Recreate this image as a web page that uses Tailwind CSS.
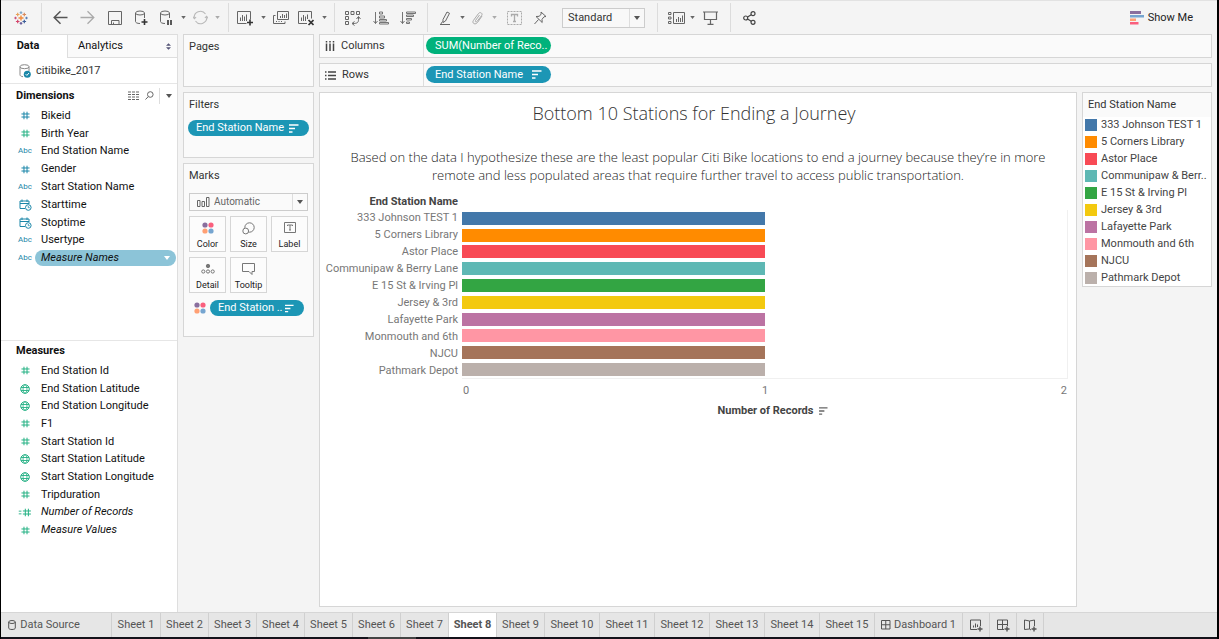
<!DOCTYPE html>
<html lang="en">
<head>
<meta charset="utf-8">
<meta name="viewport" content="width=device-width, initial-scale=1">
<title>citibike_2017</title>
<script src="https://cdn.jsdelivr.net/npm/@tailwindcss/browser@4"></script>
</head>
<body class="min-h-screen flex flex-col bg-black pl-px pr-0.5 font-[Roboto,sans-serif] text-[11px] leading-4 text-[#333]">

<svg class="hidden" aria-hidden="true">
  <symbol id="caret" viewBox="0 0 6 4"><path d="M0 0h6L3 4z" fill="currentColor"/></symbol>
  <symbol id="hash" viewBox="0 0 10 10"><path d="M3.3.8v8.4M6.7.8v8.4M.5 3.3h9M.5 6.7h9" stroke="currentColor" stroke-width="1.1" fill="none"/></symbol>
  <symbol id="globe" viewBox="0 0 10 10"><g stroke="currentColor" fill="none"><circle cx="5" cy="5" r="4.3"/><ellipse cx="5" cy="5" rx="2" ry="4.3" stroke-width=".8"/><path d="M1 3.5h8M1 6.5h8" stroke-width=".9"/></g></symbol>
  <symbol id="datetime" viewBox="0 0 13 12"><g stroke="currentColor" fill="none"><path d="M6 9.5H1V2h9v3M1 4.5h9M3 .5V3M8 .5V3"/><circle cx="9.3" cy="8.5" r="2.8"/><path d="M9.3 7v1.7h1.4" stroke-width=".8"/></g></symbol>
  <symbol id="sortlines" viewBox="0 0 10 9"><path d="M0 1h9.5M0 4.5h6M0 8h3.5" stroke="currentColor" stroke-width="1.5"/></symbol>
  <symbol id="dots" viewBox="0 0 12 12"><circle cx="3" cy="3" r="2.6" fill="#8a6f9e"/><circle cx="9" cy="3" r="2.6" fill="#fa5f7d"/><circle cx="3" cy="9" r="2.6" fill="#ffa074"/><circle cx="9" cy="9" r="2.6" fill="#76a5d0"/></symbol>
  <symbol id="grid" viewBox="0 0 10 10"><path d="M.5.5h8.5v8.5H.5zM4.75.5v8.5M.5 4.75h8.5" stroke="currentColor" fill="none"/></symbol>
</svg>

<header class="flex h-[34px] shrink-0 items-stretch border-t border-[#e2e2e2] bg-[#f4f4f4] text-[#666]">
  <div class="flex w-10 items-center justify-center">
    <svg class="size-[14px]" viewBox="0 0 14 14" role="img" aria-label="Tableau" fill="none" stroke-width="1.2">
      <path d="M7 4.5v5M4.5 7h5" stroke="#f08a3c" stroke-width="1.4"/>
      <path d="M3.7 1.7v3.6M1.9 3.5h3.6" stroke="#e8a15a"/><path d="M10.3 1.7v3.6M8.5 3.5h3.6" stroke="#d98a5c"/>
      <path d="M3.7 8.7v3.6M1.9 10.5h3.6" stroke="#d3456b"/><path d="M10.3 8.7v3.6M8.5 10.5h3.6" stroke="#3f5f9a"/>
      <path d="M7 .3v2.6M5.7 1.6h2.6" stroke="#7fa8c9"/><path d="M7 11.1v2.6M5.7 12.4h2.6" stroke="#6a5f9a"/>
      <path d="M1.5 5.7v2.6M.2 7h2.6" stroke="#c9507a"/><path d="M12.5 5.7v2.6M11.2 7h2.6" stroke="#5b7fb5"/>
    </svg>
  </div>
  <div class="flex items-center border-x border-[#dcdcdc] px-1 my-0.5">
    <button class="flex w-7 justify-center text-[#555]" aria-label="Back"><svg class="size-[15px]" viewBox="0 0 15 15" fill="none" stroke="currentColor" stroke-width="1.5"><path d="M14.5 7.5H1.2M7.5 1.2L1.2 7.5l6.3 6.3"/></svg></button>
    <button class="flex w-[27px] justify-center text-[#aaa]" aria-label="Forward"><svg class="size-[15px]" viewBox="0 0 15 15" fill="none" stroke="currentColor" stroke-width="1.3"><path d="M.5 7.5h13.3M7.5 1.2l6.3 6.3-6.3 6.3"/></svg></button>
    <button class="flex w-[27px] justify-center" aria-label="Save"><svg class="size-[14px]" viewBox="0 0 14 14" fill="none" stroke="currentColor"><path d="M.5.5h13v13H.5zM3.5 13.5v-4h7.5v4M5.5 13.5v-2"/></svg></button>
    <button class="flex w-[26px] justify-center" aria-label="New data source"><svg class="h-[16px] w-[14px]" viewBox="0 0 14 16" fill="none" stroke="currentColor"><ellipse cx="6" cy="3" rx="4.5" ry="2"/><path d="M1.5 3v8.5c0 1 1.5 2 4.5 2M10.5 3v5"/><path d="M10.5 9v6M7.5 12h6" stroke="#333" stroke-width="1.6"/></svg></button>
    <button class="flex w-[23px] justify-center" aria-label="Pause auto updates"><svg class="h-[16px] w-[14px]" viewBox="0 0 14 16" fill="none" stroke="currentColor"><ellipse cx="6" cy="3" rx="4.5" ry="2"/><path d="M1.5 3v8.5c0 1 1.5 2 4.5 2M10.5 3v5"/><path d="M9 10v5M12 10v5" stroke="#333" stroke-width="1.6"/></svg></button>
    <button class="flex w-[13px] justify-center" aria-label="Pause options"><svg class="h-[3px] w-[5px]"><use href="#caret"/></svg></button>
    <button class="flex w-5 justify-center text-[#b8b8b8]" aria-label="Run update"><svg class="size-[15px]" viewBox="0 0 15 15" fill="none" stroke="currentColor" stroke-width="1.1"><path d="M1.3 8.500A6.200 6.200 0 0 1 12.500 4M13.700 6.500A6.200 6.200 0 0 1 2.500 11"/><path d="M.2 6.700l1.200 2 1.700-1.500M14.800 8.300l-1.200-2-1.700 1.500"/></svg></button>
    <button class="flex w-[14px] justify-center text-[#aaa]" aria-label="Update options"><svg class="h-[3px] w-[5px]"><use href="#caret"/></svg></button>
  </div>
  <div class="flex items-center border-r border-[#dcdcdc] px-1 my-0.5">
    <button class="flex w-6 justify-center" aria-label="New worksheet"><svg class="size-[16px]" viewBox="0 0 16 16" fill="none" stroke="currentColor"><path d="M9.5 13.5h-9V1.500h13v8M3.500 11V7.500M5.500 11V5M7.500 11V6.500M9.500 11V4.500"/><path d="M13 9.500v6M10 12.500h6" stroke="#333" stroke-width="1.6"/></svg></button>
    <button class="flex w-3 justify-center" aria-label="New worksheet options"><svg class="h-[3px] w-[5px]"><use href="#caret"/></svg></button>
    <button class="flex w-6 justify-center" aria-label="Duplicate"><svg class="size-[16px]" viewBox="0 0 16 16" fill="none" stroke="currentColor"><path d="M4.5 1.500h11v8h-11zM7.500 8V6M9.500 8V4M11.500 8V5M13.500 8V3.500M2.500 5.500h-2v8h11.500v-2"/><path d="M3 11.500h1M5.500 11.500h1M8 11.500h1"/></svg></button>
    <button class="flex w-[25px] justify-center" aria-label="Clear sheet"><svg class="size-[16px]" viewBox="0 0 16 16" fill="none" stroke="currentColor"><path d="M9 13.500H.5V1.500h13v7M3.500 11V7.500M5.500 11V5M7.500 11V6.500M9.500 9V4.500"/><path d="M10.500 10l5 5M15.500 10l-5 5" stroke="#333" stroke-width="1.7"/></svg></button>
    <button class="flex w-3 justify-center" aria-label="Clear options"><svg class="h-[3px] w-[5px]"><use href="#caret"/></svg></button>
  </div>
  <div class="flex items-center border-r border-[#dcdcdc] pl-1 pr-1.5 my-0.5">
    <button class="flex w-7 justify-center" aria-label="Swap rows and columns"><svg class="size-[16px]" viewBox="0 0 16 16" fill="none" stroke="currentColor"><path d="M.5 1.500h3v3h-3zM6 1.500h3v3H6zM11.500 1.500h3v3h-3zM.5 6.500h3v3h-3zM.5 11.500h3v3h-3z"/><path d="M13.500 7v2.500c0 3-1 4-6 4M11.500 9l2-2.500L15.500 9M9.500 11.500l-2.500 2 2.500 2"/></svg></button>
    <button class="flex w-[27px] justify-center" aria-label="Sort ascending"><svg class="size-[16px]" viewBox="0 0 16 16" fill="none" stroke="currentColor"><path d="M2.500 2v11.500M.5 11l2 2.500 2-2.500M6.500 2h3v2h-3zM6.500 6h5v2h-5zM6.500 9.500h7v1.500h-7zM6.500 12.500h9v1.500h-9z" stroke-width=".9"/></svg></button>
    <button class="flex w-[27px] justify-center" aria-label="Sort descending"><svg class="size-[16px]" viewBox="0 0 16 16" fill="none" stroke="currentColor"><path d="M2.500 2v11.500M.5 11l2 2.500 2-2.500M6.500 2h9v1.500h-9zM6.500 5h7v1.500h-7zM6.500 8.500h5v1.500h-5zM6.500 12h3v1.500h-3z" stroke-width=".9"/></svg></button>
  </div>
  <div class="flex items-center border-r border-[#dcdcdc] pl-2 pr-3 my-0.5">
    <button class="flex w-5 justify-center" aria-label="Highlight"><svg class="size-[16px]" viewBox="0 0 16 16" fill="none" stroke="currentColor"><path d="M5 9.500l4-7.500 2.500 1.300-4 7.700-2.500 1.500zM2 14.500h10M4.500 11.500l-2 3"/></svg></button>
    <button class="flex w-3 justify-center" aria-label="Highlight options"><svg class="h-[3px] w-[5px]"><use href="#caret"/></svg></button>
    <button class="flex w-5 justify-center text-[#aaa]" aria-label="Group"><svg class="size-[14px]" viewBox="0 0 14 14" fill="none" stroke="currentColor"><path d="M11 5l-4.500 6.500c-2.500 3-6 .5-4-2.200L7.500 2.500c1.500-2 4.500-.2 3.300 1.800L6 10.500c-1 1-2.200 0-1.500-1L8.500 4"/></svg></button>
    <button class="flex w-[13px] justify-center text-[#aaa]" aria-label="Group options"><svg class="h-[3px] w-[5px]"><use href="#caret"/></svg></button>
    <button class="flex w-[26px] justify-center text-[#aaa]" aria-label="Show mark labels"><svg class="h-[14px] w-[15px]" viewBox="0 0 15 14" fill="none" stroke="currentColor"><path d="M.5.5h14v13H.5z" stroke-dasharray="2 1"/><path d="M4.500 5.500v-2h6v2M7.500 3.500V11M6 10.500h3" stroke-width="1.3"/></svg></button>
    <button class="flex w-[26px] justify-center" aria-label="Fix axes"><svg class="size-[14px]" viewBox="0 0 14 14" fill="none" stroke="currentColor"><path d="M8 1l5 4.500-2 .3-2 2.500.2 3.200L3 5.500 6.300 5.300 8.200 3zM5.500 8.500L1.500 13"/></svg></button>
    <label class="relative ml-[9px] flex items-center text-[#333]">
      <span class="sr-only">Fit</span>
      <select class="h-5 w-[83px] appearance-none border border-[#ccc] bg-[#f8f8f8] pl-[5px] leading-[14px]"><option>Standard</option><option>Fit Width</option><option>Entire View</option></select>
      <span class="pointer-events-none absolute inset-y-px right-px flex w-[15px] items-center justify-center border-l border-[#ddd] text-[#555]"><svg class="h-1 w-[6px]"><use href="#caret"/></svg></span>
    </label>
  </div>
  <div class="flex items-center border-r border-[#dcdcdc] px-1.5 my-0.5">
    <button class="flex w-6 justify-center" aria-label="Show or hide cards"><svg class="h-[12px] w-[17px]" viewBox="0 0 17 12" fill="none" stroke="currentColor"><path d="M.5.5h2.500v2H.5zM.5 5h2.500v2H.5zM.5 9.500h2.500v2H.5zM5.500.5h11v11h-11zM8.500 10V7M10.500 10V5M12.500 10V6M14.500 10V3.500"/></svg></button>
    <button class="flex w-2 justify-center" aria-label="Card options"><svg class="h-[3px] w-[5px]"><use href="#caret"/></svg></button>
    <button class="flex w-7 justify-center" aria-label="Presentation mode"><svg class="h-[14px] w-[15px]" viewBox="0 0 15 14" fill="none" stroke="currentColor"><path d="M0 1h15M1.500 1v7.500h12V1M7.500 8.500v4.500M4.500 13.300h6" stroke-width="1.2"/></svg></button>
  </div>
  <button class="ml-1 flex w-7 items-center justify-center text-[#444]" aria-label="Share"><svg class="h-[14px] w-[13px]" viewBox="0 0 13 14" fill="none" stroke="currentColor" stroke-width="1.2"><circle cx="2.700" cy="7" r="2"/><circle cx="10" cy="2.700" r="2"/><circle cx="10" cy="11.300" r="2"/><path d="M4.500 6l3.800-2.300M4.500 8l3.800 2.300"/></svg></button>
  <button class="ml-auto mr-6 flex items-center gap-1 text-[#222]"><svg class="h-[14px] w-[14px]" viewBox="0 0 14 14"><path fill="#8a6f9e" d="M0 0h11v3H0z"/><path fill="#76a5d0" d="M0 4h14v2.500H0z"/><path fill="#ffa074" d="M0 7.500h6V10H0z"/><path fill="#fa5f7d" d="M0 11h8.500v2.500H0z"/></svg>Show Me</button>
</header>

<div class="flex flex-1 bg-[#f4f4f4]">
  <aside class="flex w-[177px] shrink-0 flex-col border-r border-[#dedede] bg-white text-[#111]">
    <div class="flex h-6 shrink-0 border-t border-[#ddd]" role="tablist">
      <button role="tab" aria-selected="true" class="w-[66px] pb-px pr-3 text-center font-bold">Data</button>
      <button role="tab" aria-selected="false" class="flex flex-1 items-center justify-between border-b border-l border-[#dedede] bg-[#fafafa] pl-2.5 pr-[6px]">Analytics
        <svg class="h-[7px] w-[5px] text-[#557]" viewBox="0 0 6 8" fill="currentColor"><path d="M0 3h6L3 0zM0 5h6L3 8z"/></svg></button>
    </div>
    <div class="flex h-[26px] shrink-0 items-center gap-[5px] border-b border-[#e6e6e6] pl-[18px] text-[#333]">
      <svg class="h-[14px] w-3" viewBox="0 0 12 14" fill="none" stroke="#888"><ellipse cx="5.500" cy="2.700" rx="4.500" ry="2"/><path d="M1 2.700v8c0 1 1 1.800 3 2M10 2.700V7"/><circle cx="8.300" cy="10.200" r="3.500" fill="#1a87a8" stroke="none"/><path d="M6.700 10.200l1.200 1.200L10 9" stroke="#fff"/></svg>
      citibike_2017
    </div>
    <div class="flex h-[23px] shrink-0 items-center pl-[15px]">
      <h2 class="font-bold">Dimensions</h2>
      <button class="ml-auto text-[#666]" aria-label="View as list"><svg class="h-[9px] w-[11px]" viewBox="0 0 11 9" stroke="currentColor" stroke-width="1.2" fill="none"><path d="M0 1h11M0 3.500h11M0 6h11M0 8.500h11" stroke-dasharray="3 1"/></svg></button>
      <button class="ml-[6px] text-[#666]" aria-label="Find field"><svg class="h-[9px] w-[9px]" viewBox="0 0 9 9" fill="none" stroke="currentColor"><circle cx="5.300" cy="3.500" r="2.800"/><path d="M3.200 5.700L.5 8.500"/></svg></button>
      <button class="ml-[5px] flex h-4 w-[18px] items-center justify-center border-l border-[#ddd] text-[#555]" aria-label="Dimension options"><svg class="h-1 w-[6px]"><use href="#caret"/></svg></button>
    </div>
    <ul class="flex h-[160px] shrink-0 flex-col text-[#1a86a8] [&>li]:flex [&>li]:flex-1 [&>li]:items-center [&_i]:flex [&_i]:w-6 [&_i]:justify-center [&_i]:text-[8px] [&_i]:not-italic [&_span]:text-[#111] pl-3">
      <li><i><svg class="size-[9px]"><use href="#hash"/></svg></i><span class="ml-1">Bikeid</span></li>
      <li><i class="text-[#22b083]"><svg class="size-[9px]"><use href="#hash"/></svg></i><span class="ml-1">Birth Year</span></li>
      <li><i>Abc</i><span class="ml-1">End Station Name</span></li>
      <li><i><svg class="size-[9px]"><use href="#hash"/></svg></i><span class="ml-1">Gender</span></li>
      <li><i>Abc</i><span class="ml-1">Start Station Name</span></li>
      <li><i><svg class="h-3 w-[13px]"><use href="#datetime"/></svg></i><span class="ml-1">Starttime</span></li>
      <li><i><svg class="h-3 w-[13px]"><use href="#datetime"/></svg></i><span class="ml-1">Stoptime</span></li>
      <li><i>Abc</i><span class="ml-1">Usertype</span></li>
      <li><i>Abc</i><span class="mr-px flex h-4 flex-1 items-center justify-between rounded-full bg-[#8cc4d8] pl-[6px] pr-[6px] italic -ml-0.5">Measure Names<svg class="h-1 w-[6px] text-white"><use href="#caret"/></svg></span></li>
    </ul>
    <div class="mt-[73px] flex h-[22px] shrink-0 items-start border-t border-[#e6e6e6] pl-[15px] pt-0.5"><h2 class="font-bold">Measures</h2></div>
    <ul class="flex h-[177px] shrink-0 flex-col text-[#22b083] [&>li]:flex [&>li]:flex-1 [&>li]:items-center [&_i]:flex [&_i]:w-6 [&_i]:justify-center [&_i]:not-italic [&_span]:ml-1 [&_span]:text-[#111] pl-3">
      <li><i><svg class="size-[9px]"><use href="#hash"/></svg></i><span>End Station Id</span></li>
      <li><i><svg class="size-[10px]"><use href="#globe"/></svg></i><span>End Station Latitude</span></li>
      <li><i><svg class="size-[10px]"><use href="#globe"/></svg></i><span>End Station Longitude</span></li>
      <li><i><svg class="size-[9px]"><use href="#hash"/></svg></i><span>F1</span></li>
      <li><i><svg class="size-[9px]"><use href="#hash"/></svg></i><span>Start Station Id</span></li>
      <li><i><svg class="size-[10px]"><use href="#globe"/></svg></i><span>Start Station Latitude</span></li>
      <li><i><svg class="size-[10px]"><use href="#globe"/></svg></i><span>Start Station Longitude</span></li>
      <li><i><svg class="size-[9px]"><use href="#hash"/></svg></i><span>Tripduration</span></li>
      <li><i><svg class="h-[9px] w-[15px]" viewBox="0 0 15 10"><path d="M0 3.500h3M0 6.500h3" stroke="currentColor"/><use href="#hash" x="4" width="10" height="10"/></svg></i><span class="italic">Number of Records</span></li>
      <li><i><svg class="size-[9px]"><use href="#hash"/></svg></i><span class="italic">Measure Values</span></li>
    </ul>
  </aside>

  <section class="ml-[5px] flex w-[131px] shrink-0 flex-col gap-[5px]">
    <div class="h-[53px] border border-[#d6d6d6] bg-[#fafafa] pl-[5px] pt-1"><h2>Pages</h2></div>
    <div class="h-[66px] border border-[#d6d6d6] bg-[#fafafa] px-1 pt-1">
      <h2 class="pl-px">Filters</h2>
      <button class="mt-[7px] flex h-4 w-full items-center justify-between rounded-full bg-[#1c96b5] pl-2 pr-2.5 text-white">End Station Name<svg class="h-[9px] w-[10px]"><use href="#sortlines"/></svg></button>
    </div>
    <div class="h-[174px] border border-[#d6d6d6] bg-[#fafafa] px-[5px] pt-1">
      <h2>Marks</h2>
      <label class="relative mt-[9px] block text-[#666]">
        <span class="sr-only">Mark type</span>
        <select class="block h-[18px] w-full appearance-none border border-[#ccc] bg-[#fafafa] pl-6 text-[10px] leading-[14px]"><option>Automatic</option><option>Bar</option><option>Line</option></select>
        <svg class="pointer-events-none absolute left-2 top-1 h-[10px] w-[13px]" viewBox="0 0 13 10" fill="none" stroke="currentColor"><path d="M.5 3.500h2.500v6H.5zM5 4.500h2.500v5H5zM9.500.5H12v9H9.500z"/></svg>
        <span class="pointer-events-none absolute inset-y-px right-px flex w-[15px] items-center justify-center border-l border-[#ddd] text-[#555]"><svg class="h-1 w-[6px]"><use href="#caret"/></svg></span>
      </label>
      <div class="mt-[5px] grid grid-cols-3 gap-x-1 gap-y-[5px] text-[9px] leading-[14px] text-[#222] [&>button]:flex [&>button]:h-9 [&>button]:flex-col [&>button]:items-center [&>button]:justify-between [&>button]:border [&>button]:border-[#d6d6d6] [&>button]:bg-[#fcfcfc] [&>button]:pt-1 [&_svg]:text-[#777]">
        <button><svg class="size-3 mt-px"><use href="#dots"/></svg>Color</button>
        <button><svg class="h-[13px] w-[13px] mt-px" viewBox="0 0 13 13" fill="none" stroke="currentColor"><circle cx="7.500" cy="5.500" r="4.700"/><circle cx="3.700" cy="9" r="2.900" fill="#fcfcfc"/></svg>Size</button>
        <button><svg class="h-[11px] w-3 mt-px" viewBox="0 0 12 11" fill="none" stroke="currentColor"><path d="M.5.5h11v10H.5zM3.500 4V3h5v1M6 3v5M5 8h2"/></svg>Label</button>
        <button><svg class="h-3 w-[14px] mt-px" viewBox="0 0 14 12" fill="none" stroke="currentColor"><circle cx="7" cy="3" r="1.700" fill="currentColor"/><circle cx="2.300" cy="8.500" r="1.600"/><circle cx="7" cy="8.500" r="1.600"/><circle cx="11.700" cy="8.500" r="1.600"/></svg>Detail</button>
        <button><svg class="h-3 w-[13px] mt-px" viewBox="0 0 13 12" fill="none" stroke="currentColor"><path d="M.5.500h12v8H10v3L7 8.500H.5z"/></svg>Tooltip</button>
      </div>
      <div class="mt-[7px] flex items-center gap-1 pl-[5px] pr-1">
        <svg class="size-3 shrink-0"><use href="#dots"/></svg>
        <button class="flex h-4 flex-1 items-center justify-between rounded-full bg-[#1c96b5] pl-2 pr-2.5 text-white">End Station ..<svg class="h-[9px] w-[9px]"><use href="#sortlines"/></svg></button>
      </div>
    </div>
  </section>

  <main class="ml-[5px] mr-[5px] flex min-w-0 flex-1 flex-col gap-[5px] pb-[5px]">
    <div class="flex h-6 shrink-0 border border-[#d6d6d6] bg-[#fafafa]">
      <div class="flex w-[104px] items-center gap-1.5 border-r border-[#ddd] pl-[5px]"><svg class="h-[10px] w-[10px]" viewBox="0 0 10 10" stroke="#444" stroke-width="1.5"><path d="M1.500 0v1.500M5 0v1.500M8.500 0v1.500M1.500 2.500V10M5 2.500V10M8.500 2.500V10"/></svg>Columns</div>
      <button class="ml-0.5 mt-0.5 h-[17px] w-[125px] rounded-full bg-[#00b27b] pl-[9px] text-left text-white">SUM(Number of Reco..</button>
    </div>
    <div class="flex h-6 shrink-0 border border-[#d6d6d6] bg-[#fafafa]">
      <div class="flex w-[104px] items-center gap-1.5 border-r border-[#ddd] pl-[5px]"><svg class="h-[9px] w-[11px]" viewBox="0 0 11 9" stroke="#444" stroke-width="1.3"><path d="M0 1h1.500M3 1h8M0 4.500h1.500M3 4.500h8M0 8h1.500M3 8h8"/></svg>Rows</div>
      <button class="ml-0.5 mt-0.5 flex h-[17px] w-[125px] items-center justify-between rounded-full bg-[#1c96b5] pl-[9px] pr-[9px] text-white">End Station Name<svg class="h-[9px] w-[10px]"><use href="#sortlines"/></svg></button>
    </div>

    <div class="flex flex-1 gap-[5px]">
      <article class="flex min-w-0 flex-1 flex-col border border-[#d6d6d6] bg-white pr-2 text-[#777]">
        <h1 class="mt-2 text-center font-['Open_Sans',sans-serif] text-[18px] font-light leading-6 text-[#333]">Bottom 10 Stations for Ending a Journey</h1>
        <p class="mt-[23px] pl-2 text-center font-['Open_Sans',sans-serif] text-[13px] font-light leading-[18px] text-[#222]">Based on the data I hypothesize these are the least popular Citi Bike locations to end a journey because they’re in more<br>remote and less populated areas that require further travel to access public transportation.</p>
        <div class="mt-2.5 w-[138px] text-right font-bold text-[#444]">End Station Name</div>
        <div class="flex">
          <ul class="flex h-[169px] w-[142px] shrink-0 flex-col pr-1 text-right [&>li]:flex [&>li]:flex-1 [&>li]:items-center [&>li]:justify-end [&>li]:whitespace-nowrap">
            <li>333 Johnson TEST 1</li><li>5 Corners Library</li><li>Astor Place</li><li>Communipaw &amp; Berry Lane</li><li>E 15 St &amp; Irving Pl</li><li>Jersey &amp; 3rd</li><li>Lafayette Park</li><li>Monmouth and 6th</li><li>NJCU</li><li>Pathmark Depot</li>
          </ul>
          <div class="flex h-[169px] flex-1 flex-col border-b border-r border-[#f0f0f0] [&>div]:flex [&>div]:flex-1 [&>div]:items-center [&_b]:h-[13px] [&_b]:w-1/2">
            <div><b class="bg-[#4378aa]"></b></div><div><b class="bg-[#ff8b00]"></b></div><div><b class="bg-[#f84a55]"></b></div><div><b class="bg-[#5eb8b4]"></b></div><div><b class="bg-[#33a543]"></b></div><div><b class="bg-[#f3c90f]"></b></div><div><b class="bg-[#bc73a3]"></b></div><div><b class="bg-[#ff96a4]"></b></div><div><b class="bg-[#a5745a]"></b></div><div><b class="bg-[#bbb0ab]"></b></div>
          </div>
        </div>
        <div class="ml-[142px] mt-1 flex justify-between px-px"><span>0</span><span>1</span><span>2</span></div>
        <div class="ml-[142px] mt-1 flex items-center justify-center gap-1.5 pl-4 font-bold text-[#444]">Number of Records<svg class="h-2 w-[9px] text-[#666]"><use href="#sortlines"/></svg></div>
      </article>

      <aside class="w-[130px] shrink-0 self-start border border-[#d6d6d6] bg-white">
        <h2 class="h-6 bg-[#fafafa] pl-[5px] pt-1">End Station Name</h2>
        <ul class="flex h-[169px] flex-col text-[#444] [&>li]:flex [&>li]:flex-1 [&>li]:items-center [&>li]:gap-[4px] [&>li]:whitespace-nowrap [&_b]:h-3 [&_b]:w-3 [&_b]:ml-0.5">
          <li><b class="bg-[#4378aa]"></b>333 Johnson TEST 1</li><li><b class="bg-[#ff8b00]"></b>5 Corners Library</li><li><b class="bg-[#f84a55]"></b>Astor Place</li><li><b class="bg-[#5eb8b4]"></b>Communipaw &amp; Berr..</li><li><b class="bg-[#33a543]"></b>E 15 St &amp; Irving Pl</li><li><b class="bg-[#f3c90f]"></b>Jersey &amp; 3rd</li><li><b class="bg-[#bc73a3]"></b>Lafayette Park</li><li><b class="bg-[#ff96a4]"></b>Monmouth and 6th</li><li><b class="bg-[#a5745a]"></b>NJCU</li><li><b class="bg-[#bbb0ab]"></b>Pathmark Depot</li>
        </ul>
      </aside>
    </div>
  </main>
</div>

<nav class="flex h-[25px] shrink-0 border-t border-[#d6d6d6] bg-[#e6e6e6] text-[#555] [&>button]:flex [&>button]:items-center [&>button]:justify-center [&>button]:border-r [&>button]:border-[#d0d0d0] [&>button]:whitespace-nowrap">
  <button class="w-[111px] gap-1 pr-6"><svg class="h-[10px] w-2" viewBox="0 0 8 10" fill="none" stroke="currentColor"><ellipse cx="4" cy="2" rx="3.300" ry="1.500"/><path d="M.7 2v6c0 2 6.600 2 6.600 0V2"/></svg>Data Source</button>
  <button class="w-[49px]">Sheet 1</button><button class="w-12">Sheet 2</button><button class="w-12">Sheet 3</button><button class="w-12">Sheet 4</button><button class="w-12">Sheet 5</button><button class="w-12">Sheet 6</button><button class="w-12">Sheet 7</button><button class="w-12 bg-white font-bold" aria-current="page">Sheet 8</button><button class="w-12">Sheet 9</button><button class="w-[55px]">Sheet 10</button><button class="w-[55px]">Sheet 11</button><button class="w-[55px]">Sheet 12</button><button class="w-[55px]">Sheet 13</button><button class="w-[55px]">Sheet 14</button><button class="w-[55px]">Sheet 15</button>
  <button class="w-[88px] gap-[3px]"><svg class="size-[10px]"><use href="#grid"/></svg>Dashboard 1</button>
  <button class="w-[27px]" aria-label="New worksheet"><svg class="size-[13px]" viewBox="0 0 13 13" fill="none" stroke="currentColor"><path d="M7 10.500H.5V1h10v6M3.500 8.500V6.500M5.500 8.500V4.500M7.500 8V5.500"/><path d="M10 7.500v5M7.500 10h5" stroke-width="1.4"/></svg></button>
  <button class="w-[27px]" aria-label="New dashboard"><svg class="size-[13px]" viewBox="0 0 13 13" fill="none" stroke="currentColor"><path d="M7 10.500H.5V1h10v6M5.500 1v9.500M.5 5.500h10"/><path d="M10 7.500v5M7.500 10h5" stroke-width="1.4"/></svg></button>
  <button class="w-[27px]" aria-label="New story"><svg class="size-[13px]" viewBox="0 0 13 13" fill="none" stroke="currentColor"><path d="M7 11l-1.500-1L.5 10.500V1l5 1 5-1v6M5.500 2v8"/><path d="M10 7.500v5M7.500 10h5" stroke-width="1.4"/></svg></button>
</nav>
<div class="h-0.5 shrink-0 bg-[#14121a] pl-[367px]"><div class="h-0.5 w-12 bg-[#444]"></div></div>
</body>
</html>
